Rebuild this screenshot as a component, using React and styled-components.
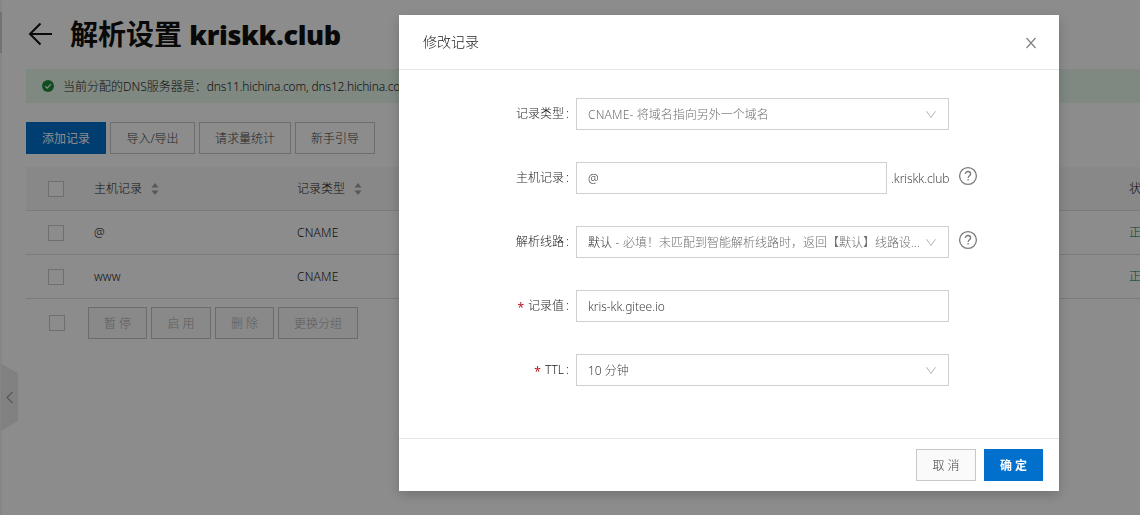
import React from "react";
import styled, { createGlobalStyle, css } from "styled-components";

const GlobalStyle = createGlobalStyle`
  * { box-sizing: border-box; }
  body {
    margin: 0;
    background: #fff;
    color: #1c1c1c;
    font: 12px/18px "Noto Sans", "Noto Sans CJK SC", sans-serif;
    font-weight: 300;
    overflow: hidden;
  }
`;

const Page = styled.div`
  display: flex;
  width: 1140px;
  height: 515px;
  overflow: hidden;
`;

const Rail = styled.aside`
  width: 2px;
  flex: none;
  padding-top: 12px;
  background: #f5f5f5;
`;

const RailMark = styled.div`
  height: 41px;
  background: #d2d2d2;
`;

const CollapseHandle = styled.svg`
  position: absolute;
  left: 1px;
  top: 364px;
`;

const Content = styled.main`
  flex: none;
  width: 1170px;
  padding: 14px 0 0 24px;
`;

const TitleBar = styled.header`
  display: flex;
  align-items: center;
  height: 40px;
  margin-bottom: 15px;
`;

const BackIcon = styled.svg`
  flex: none;
  margin: 2px 16px 0 1px;
`;

const Title = styled.h1`
  margin: 0;
  color: #111;
  font-size: 28px;
  line-height: 40px;
  font-weight: 700;
  white-space: pre;
`;

const Domain = styled.span`
  font-family: "Open Sans", "Noto Sans", sans-serif;
  font-size: 27px;
  font-weight: 800;
  letter-spacing: -0.35px;
`;

const Banner = styled.div`
  display: flex;
  align-items: center;
  height: 34px;
  padding: 2px 0 0 16px;
  margin-bottom: 19px;
  background: #e8f8ec;
  white-space: pre;
`;

const CheckBadge = styled.svg`
  flex: none;
  margin: -2px 9px 0 0;
`;

const Latin = styled.span`
  letter-spacing: ${(p) => p.$ls || 0}px;
`;

const ButtonRow = styled.div`
  display: flex;
  gap: 4px;
`;

const Button = styled.button`
  width: ${(p) => p.$w}px;
  height: 32px;
  padding: 2px 0 0;
  border: 1px solid #c8c8c8;
  border-radius: 0;
  background: ${(p) => (p.$plain ? "#fff" : "#fafafa")};
  color: #444;
  font: inherit;
  white-space: pre;
  ${(p) => p.$primary && css`
    border-color: #0070cc;
    background: #0070cc;
    color: #fff;
    font-weight: ${p.$bold ? 700 : 400};
  `}
  ${(p) => p.$disabled && css`
    border-color: #c5c5c5;
    background: #f9f9f9;
    color: #aaa;
  `}
`;

const Table = styled.div`
  margin-top: 13px;
`;

const Row = styled.div`
  display: grid;
  grid-template-columns: 68px 203px 832px 1fr;
  align-items: center;
  height: 44px;
  border-bottom: 1px solid #e0e0e0;
  background: ${(p) => (p.$head ? "#f7f7f7" : "transparent")};
`;

const Cell = styled.div`
  display: flex;
  align-items: center;
  gap: 9px;
  white-space: nowrap;
  color: ${(p) => (p.$ok ? "#007a45" : "#1c1c1c")};
`;

const Checkbox = styled.span`
  width: 16px;
  height: 16px;
  margin-left: 22px;
  border: 1px solid #cacaca;
  background: #fff;
`;

const TableFooter = styled.div`
  display: flex;
  align-items: center;
  height: 48px;
  gap: 23px;
  padding-left: 1px;
`;

const Overlay = styled.div`
  position: fixed;
  inset: 0;
  display: flex;
  justify-content: center;
  align-items: flex-start;
  padding: 15px 81px 0 399px;
  background: rgba(0, 0, 0, 0.45);
`;

const Dialog = styled.section`
  display: flex;
  flex-direction: column;
  width: 660px;
  height: 476px;
  background: #fff;
  box-shadow: 0 4px 12px rgba(0, 0, 0, 0.2);
`;

const DialogHead = styled.header`
  display: flex;
  justify-content: space-between;
  align-items: center;
  height: 55px;
  padding: 0 23px 0 24px;
  border-bottom: 1px solid #e5e5e5;
  font-size: 14px;
`;

const CloseIcon = styled.svg`
  margin-top: 2px;
`;

const Form = styled.div`
  flex: 1;
  display: flex;
  flex-direction: column;
  gap: 32px;
  padding-top: 28px;
`;

const Field = styled.div`
  display: flex;
  height: 32px;
`;

const Label = styled.label`
  display: flex;
  justify-content: flex-end;
  width: 177px;
  padding: 6px 7px 0 0;
  line-height: 20px;
  white-space: pre;

  &::after {
    content: ":";
    margin-left: 2px;
  }
`;

const Required = styled.span`
  margin-right: 4px;
  padding-top: 2px;
  color: #b81420;
  font-weight: 400;
`;

const Control = styled.div`
  display: flex;
  align-items: center;
  justify-content: space-between;
  width: ${(p) => p.$w || 373}px;
  padding: 1px 11px 0 11px;
  border: 1px solid #d0d0d0;
  color: ${(p) => (p.$muted ? "#707070" : "#444")};
  white-space: pre;
`;

const Strong = styled.span`
  color: #333;
`;

const Suffix = styled.span`
  width: 62px;
  padding: 8px 0 0 4px;
  color: #484848;
  letter-spacing: -0.1px;
  white-space: nowrap;
`;

const HelpIcon = styled.svg`
  margin: 4px 0 0 9px;
`;

const DialogFoot = styled.footer`
  display: flex;
  justify-content: flex-end;
  gap: 8px;
  height: 53px;
  padding: 10px 16px 0 0;
  border-top: 1px solid #e5e5e5;
`;

const Sorter = () => (
  <svg width="8" height="14" viewBox="0 0 8 14" fill="#a0a0a0">
    <path d="M4 1 7.5 5.5H.5ZM4 13 .5 8.5h7Z" />
  </svg>
);

const Chevron = () => (
  <svg width="12" height="10" viewBox="0 0 12 10" fill="none" stroke="#b5b5b5">
    <path d="M1.5 1.2 6 7.5 10.5 1.2" />
  </svg>
);

const Help = () => (
  <HelpIcon width="20" height="20" viewBox="0 0 20 20" fill="none" stroke="#7a7a7a" strokeWidth="1.3">
    <circle cx="10" cy="10" r="8.4" />
    <path d="M7.4 8.1C7.4 6.4 8.5 5.5 10 5.5s2.6 1 2.6 2.4c0 1.8-2.5 2-2.5 4.2" />
    <path d="M10.1 13.1v1.5" />
  </HelpIcon>
);

export default function App() {
  return (
    <>
      <GlobalStyle />
      <Page>
        <Rail><RailMark /></Rail>
        <CollapseHandle width="17" height="67" viewBox="0 0 17 67" fill="none">
          <path d="M0 0 17 9V57L0 67Z" fill="#ebebeb" />
          <path d="M11.5 28 6 33.5 11.5 39" stroke="#a0a0a0" strokeWidth="1.2" />
        </CollapseHandle>
        <Content>
          <TitleBar>
            <BackIcon width="27" height="26" viewBox="0 0 27 26" fill="none" stroke="#111" strokeWidth="2">
              <path d="M25 12H3M13.5 1.5 3 12 13.5 22.5" />
            </BackIcon>
            <Title>解析设置 <Domain>kriskk.club</Domain></Title>
          </TitleBar>
          <Banner>
            <CheckBadge width="12" height="12" viewBox="0 0 12 12" fill="none">
              <circle cx="6" cy="6" r="6" fill="#1e8e3e" />
              <path d="M3.2 6.1 5.2 8.1 8.9 4.2" stroke="#fff" strokeWidth="1.2" />
            </CheckBadge>
            当前分配的DNS服务器是：<Latin $ls={-0.18}>dns11.hichina.com, dns12.hichina.com</Latin>
          </Banner>
          <ButtonRow>
            <Button $w={80} $primary>添加记录</Button>
            <Button $w={85} $plain>导入/导出</Button>
            <Button $w={92} $plain>请求量统计</Button>
            <Button $w={80} $plain>新手引导</Button>
          </ButtonRow>
          <Table>
            <Row $head>
              <Checkbox />
              <Cell>主机记录<Sorter /></Cell>
              <Cell>记录类型<Sorter /></Cell>
              <Cell>状态</Cell>
            </Row>
            {["@", "www"].map((host) => (
              <Row key={host}>
                <Checkbox />
                <Cell>{host}</Cell>
                <Cell><Latin $ls={0.2}>CNAME</Latin></Cell>
                <Cell $ok>正常</Cell>
              </Row>
            ))}
            <TableFooter>
              <Checkbox />
              <ButtonRow>
                <Button $w={59} $disabled>暂 停</Button>
                <Button $w={60} $disabled>启 用</Button>
                <Button $w={59} $disabled>删 除</Button>
                <Button $w={80} $disabled>更换分组</Button>
              </ButtonRow>
            </TableFooter>
          </Table>
        </Content>
      </Page>
      <Overlay>
        <Dialog>
          <DialogHead>
            修改记录
            <CloseIcon width="10" height="12" viewBox="0 0 10 12" fill="none" stroke="#808080" strokeWidth="1.2">
              <path d="M.5 1 9.5 11M9.5 1 .5 11" />
            </CloseIcon>
          </DialogHead>
          <Form>
            <Field>
              <Label>记录类型</Label>
              <Control $muted><span><Latin $ls={0.2}>CNAME-</Latin> 将域名指向另外一个域名</span><Chevron /></Control>
            </Field>
            <Field>
              <Label>主机记录</Label>
              <Control $w={311}>@</Control>
              <Suffix>.kriskk.club</Suffix>
              <Help />
            </Field>
            <Field>
              <Label>解析线路</Label>
              <Control $muted>
                <span><Strong>默认</Strong><Latin $ls={0.3}> - </Latin>必填！未匹配到智能解析线路时，返回【默认】线路设...</span>
                <Chevron />
              </Control>
              <Help />
            </Field>
            <Field>
              <Label><Required>*</Required>记录值</Label>
              <Control><Latin $ls={-0.07}>kris-kk.gitee.io</Latin></Control>
            </Field>
            <Field>
              <Label><Required>*</Required>TTL</Label>
              <Control><span>10 分钟</span><Chevron /></Control>
            </Field>
          </Form>
          <DialogFoot>
            <Button $w={60}>取 消</Button>
            <Button $w={59} $primary $bold>确 定</Button>
          </DialogFoot>
        </Dialog>
      </Overlay>
    </>
  );
}
